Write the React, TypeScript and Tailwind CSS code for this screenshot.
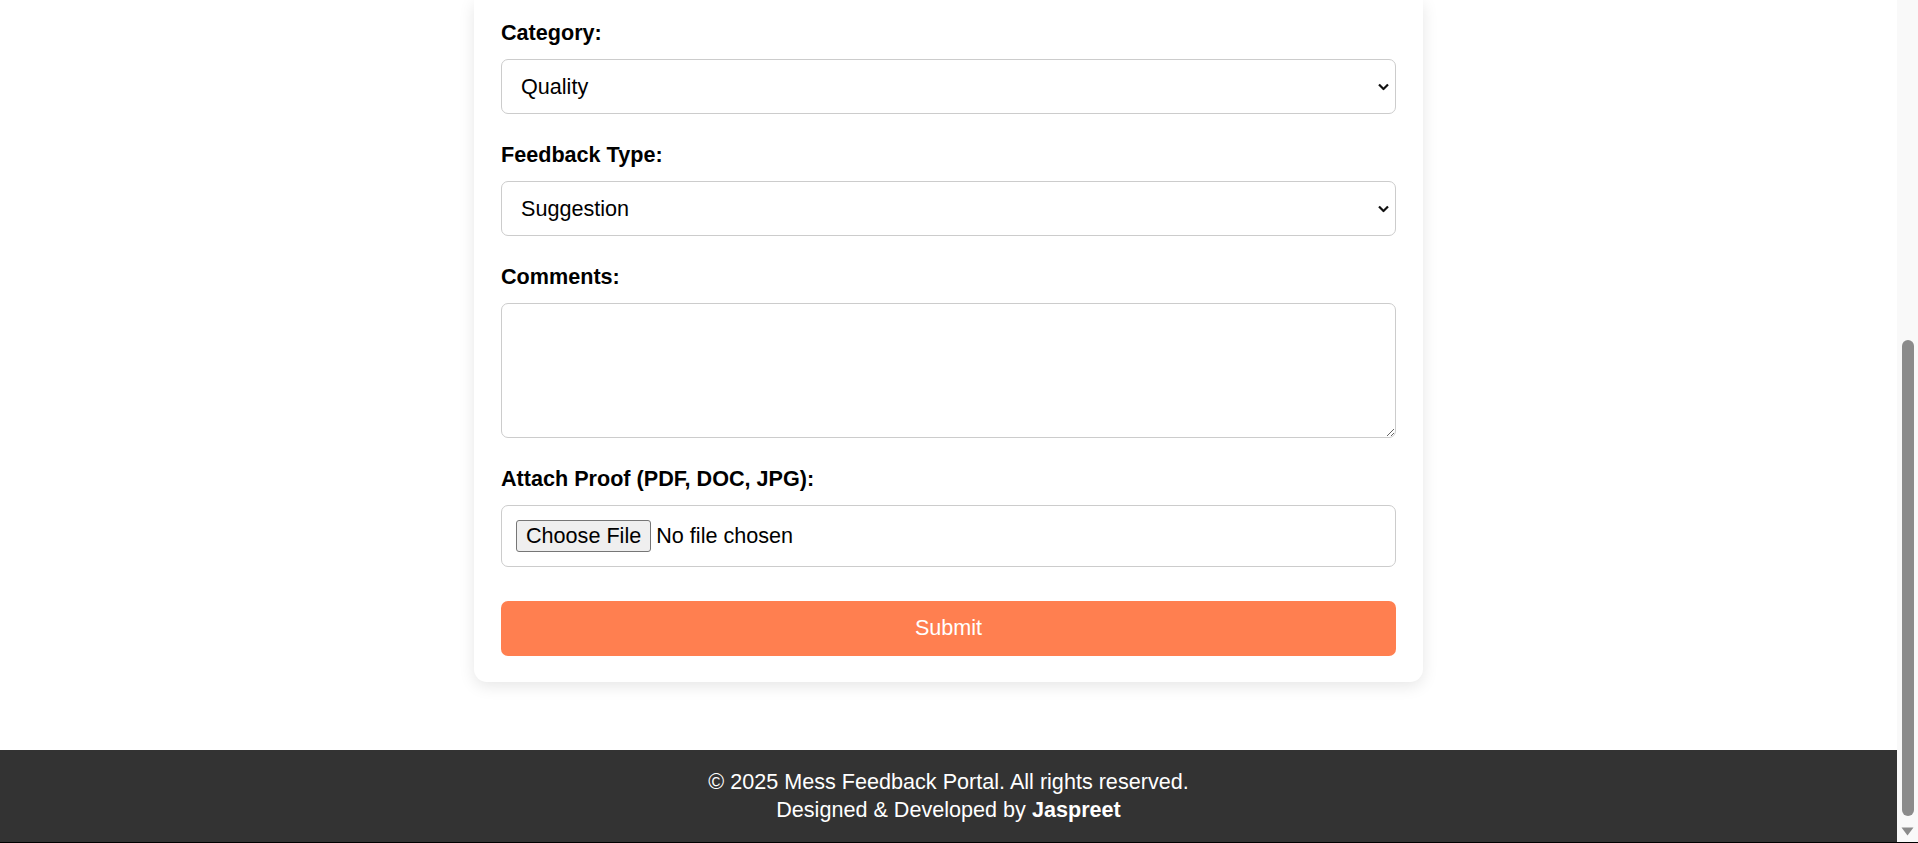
import React from "react";

function Chevron() {
  return (
    <svg
      className="pointer-events-none absolute right-[7px] top-1/2 -translate-y-1/2"
      width="11"
      height="7"
      viewBox="0 0 11 7"
      fill="none"
    >
      <path d="M1 1L5.5 5.5L10 1" stroke="#111111" strokeWidth="2.2" />
    </svg>
  );
}

function SelectField({
  label,
  value,
  options,
}: {
  label: string;
  value: string;
  options: string[];
}) {
  return (
    <div className="mb-[28px]">
      <label className="mb-[14px] block font-bold leading-[25px]">{label}</label>
      <div className="relative">
        <select
          defaultValue={value}
          className="h-[55px] w-full appearance-none rounded-[7px] border border-[#cccccc] bg-white pl-[19px] pt-[2px] text-black outline-none"
        >
          {options.map((o) => (
            <option key={o}>{o}</option>
          ))}
        </select>
        <Chevron />
      </div>
    </div>
  );
}

export default function App() {
  return (
    <div className="flex h-[843px] w-full flex-col overflow-hidden bg-white font-['Liberation_Sans',Arial,sans-serif] text-[21.6px] text-black">
      <div className="flex min-h-0 flex-1">
        <div className="flex min-w-0 flex-1 flex-col">
          <div className="mx-auto w-[949px] rounded-b-[13px] bg-white px-[27px] pb-[26px] pt-[20px] shadow-[0_4px_16px_rgba(0,0,0,0.1)]">
            <SelectField
              label="Category:"
              value="Quality"
              options={["Quality", "Quantity", "Hygiene", "Taste", "Service"]}
            />
            <SelectField
              label="Feedback Type:"
              value="Suggestion"
              options={["Suggestion", "Complaint", "Appreciation"]}
            />

            <div className="mb-[28px]">
              <label className="mb-[14px] block font-bold leading-[25px]">Comments:</label>
              <textarea className="block h-[135px] w-full rounded-[7px] border border-[#cccccc] bg-white p-[13px] outline-none" />
            </div>

            <div>
              <label className="mb-[14px] block font-bold leading-[25px]">
                Attach Proof (PDF, DOC, JPG):
              </label>
              <div className="flex h-[62px] items-center rounded-[7px] border border-[#cccccc] bg-white px-[14px]">
                <span className="flex h-[32px] items-center rounded-[3px] border border-[#767676] bg-[#efefef] px-[9px]">
                  Choose File
                </span>
                <span className="ml-[5px]">No file chosen</span>
              </div>
            </div>

            <button className="mt-[34px] h-[55px] w-full rounded-[7px] bg-[#ff7f50] text-white">
              Submit
            </button>
          </div>

          <footer className="mt-[68px] flex-1 bg-[#333333] pt-[18px] text-center leading-[28px] text-white">
            <p>© 2025 Mess Feedback Portal. All rights reserved.</p>
            <p>
              Designed &amp; Developed by <span className="font-bold">Jaspreet</span>
            </p>
          </footer>
        </div>

        <div className="flex w-[21px] flex-col items-center bg-[#f9f9f9] pt-[340px]">
          <div className="h-[476px] w-[12px] rounded-full bg-[#8b8b8b]" />
          <svg className="mt-[11px]" width="13" height="9" viewBox="0 0 13 9">
            <path d="M0.5 0.5H12.5L6.5 8.5Z" fill="#8b8b8b" />
          </svg>
        </div>
      </div>
      <div className="h-px bg-black" />
    </div>
  );
}
